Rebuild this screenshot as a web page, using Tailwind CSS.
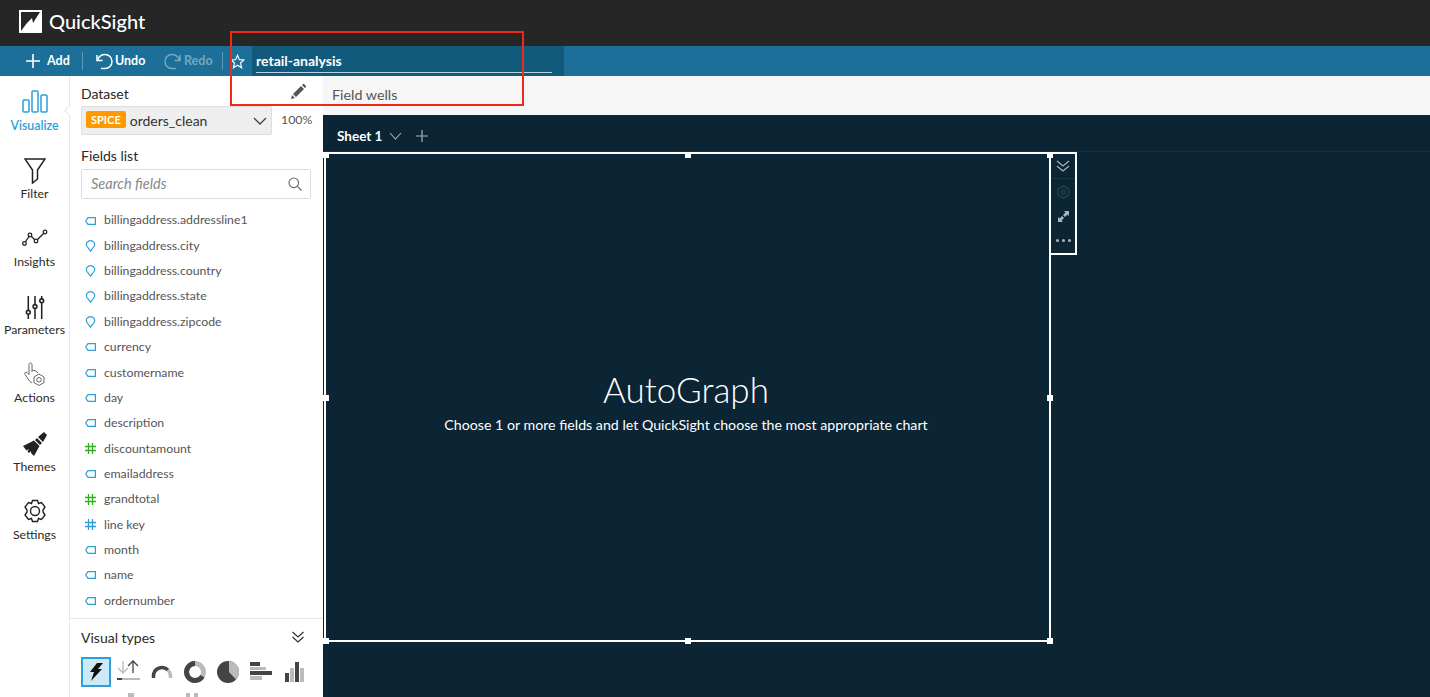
<!DOCTYPE html>
<html lang="en">
<head>
  <meta charset="UTF-8">
  <title>QuickSight</title>
  <script src="https://cdn.jsdelivr.net/npm/@tailwindcss/browser@4"></script>
</head>
<body class="relative w-[1430px] h-[697px] overflow-hidden bg-white font-['Lato',sans-serif]">

<!-- Top bar -->
<header class="h-[46px] bg-[#262626] flex items-center pl-[19px] gap-[7px] pb-[4px]">
  <svg width="23" height="23" viewBox="0 0 23 23"><rect width="23" height="23" fill="#fff"/><path d="M2 2H21L14 13L13 8L8 13L2 21Z" fill="#262626"/></svg>
  <span class="text-white text-[20px] leading-none font-medium">QuickSight</span>
</header>

<!-- Toolbar -->
<div class="h-[30px] bg-[#1b6f98] flex items-center text-white text-[12.5px] font-bold">
  <div class="flex items-center w-[82px] pl-[26px] gap-[7px]">
    <svg width="14" height="14" viewBox="0 0 14 14" stroke="#fff" stroke-width="1.6"><path d="M7 0V14M0 7H14"/></svg>
    <span>Add</span>
  </div>
  <div class="w-px h-[18px] bg-white/30"></div>
  <div class="flex items-center w-[78px] pl-[12px] gap-[1px]">
    <svg width="19" height="17" viewBox="0 0 19 17" fill="none" stroke="#fff" stroke-width="1.5"><path d="M2 2V7.5H7.5"/><path d="M2.5 7C4 3.5 6.5 1.5 10 1.5C14 1.5 17 4.5 17 8.5S14 15.5 10 15.5H6"/></svg>
    <span>Undo</span>
  </div>
  <div class="flex items-center w-[61px] pl-[2px] gap-[2px] text-white/40">
    <svg width="19" height="17" viewBox="0 0 19 17" fill="none" stroke="#fff" stroke-opacity=".4" stroke-width="1.5"><path d="M17 2V7.5H11.5"/><path d="M16.5 7C15 3.5 12.5 1.5 9 1.5C5 1.5 2 4.5 2 8.5S5 15.5 9 15.5H13"/></svg>
    <span>Redo</span>
  </div>
  <div class="w-px h-[18px] bg-white/30"></div>
  <div class="w-[29px] flex justify-center">
    <svg width="15" height="15" viewBox="0 0 24 24" fill="none" stroke="#fff" stroke-width="1.8"><path d="M12 2L15 9L22.5 9.5L16.8 14.5L18.6 22L12 18L5.4 22L7.2 14.5L1.5 9.5L9 9Z"/></svg>
  </div>
  <div class="w-[312px] h-full bg-[#125a7c] pl-[4px] pr-[12px] flex">
    <div class="w-full h-[27px] border-b border-[#b8d4e2] text-[14px] leading-[29px]">retail-analysis</div>
  </div>
</div>

<div class="flex h-[621px]">
  <!-- Icon rail -->
  <nav class="w-[70px] shrink-0 border-r border-[#e8e8e8] flex flex-col items-center text-[12.3px] leading-[16px] text-[#2a2a2a] relative">
    <div class="h-[60px] w-full pb-[2px] flex flex-col justify-end items-center text-[#2a9fd8] font-semibold">
      <svg class="mb-[5px]" width="26" height="23" viewBox="0 0 26 23" fill="none" stroke="#2a9fd8" stroke-width="1.5"><rect x="1" y="10" width="6" height="12" rx="1"/><rect x="10" y="1" width="6" height="21" rx="1"/><rect x="19" y="5" width="6" height="17" rx="1"/></svg>
      <span>Visualize</span>
    </div>
    <div class="h-[68px] w-full pb-[2px] flex flex-col justify-end items-center">
      <svg class="mb-[2px]" width="22" height="26" viewBox="0 0 22 26" fill="none" stroke="#222" stroke-width="1.5"><path d="M1 1H21L13.5 12V21L8.5 25V12Z"/></svg>
      <span>Filter</span>
    </div>
    <div class="h-[68px] w-full pb-[2px] flex flex-col justify-end items-center">
      <svg class="mb-[7px]" width="26" height="18" viewBox="0 0 26 18" fill="none" stroke="#222" stroke-width="1.3"><path d="M2 15L8 6L14 12L23 3"/><circle cx="2.5" cy="14.5" r="1.8" fill="#fff"/><circle cx="8" cy="6" r="1.8" fill="#fff"/><circle cx="14" cy="12" r="1.8" fill="#fff"/><circle cx="23" cy="3" r="1.8" fill="#fff"/></svg>
      <span>Insights</span>
    </div>
    <div class="h-[68px] w-full pb-[2px] flex flex-col justify-end items-center">
      <svg class="mb-[3px]" width="20" height="23" viewBox="0 0 20 24" fill="none" stroke="#222" stroke-width="1.6"><path d="M3 0V24M10 0V24M17 0V24"/><circle cx="3" cy="17" r="2" fill="#fff"/><circle cx="10" cy="11" r="2" fill="#fff"/><circle cx="17" cy="5" r="2" fill="#fff"/></svg>
      <span>Parameters</span>
    </div>
    <div class="h-[68px] w-full pb-[2px] flex flex-col justify-end items-center">
      <svg class="mb-[2px]" width="22" height="26" viewBox="0 0 22 26" fill="none" stroke="#666" stroke-width="1"><path d="M8 10V2.500C8 .5 5 .5 5 2.500V12.500L3 10.500C1.500 9.500 0 11 1 12.500L6 19.500L8 21"/><path d="M8 8L12 9L14 11"/><path d="M15 12L20 15V20.500L15 23.500L10 20.500V15Z"/><circle cx="15" cy="17.800" r="2.300"/></svg>
      <span>Actions</span>
    </div>
    <div class="h-[68px] w-full pb-[1px] flex flex-col justify-end items-center">
      <svg class="mb-[3px]" width="24" height="24" viewBox="0 0 24 24" fill="#222"><path d="M15 5L20 10L24 3L21 0ZM14 6L19 11L17 13L12 8ZM11 8.500L16.500 14L11 24L8 21L8 19L6 21L4.500 19.500L6 17L3.500 18.500L0 14Z"/></svg>
      <span>Themes</span>
    </div>
    <div class="h-[68px] w-full pb-[1px] flex flex-col justify-end items-center">
      <svg class="mb-[4px]" width="24" height="24" viewBox="0 0 24 24" fill="none" stroke="#222" stroke-width="1.4"><path d="M9.500 1.500H14.500L15.500 4.500L18.500 3.500L22 8L20 11V13L22 16L18.500 20.500L15.500 19.500L14.500 22.500H9.500L8.500 19.500L5.500 20.500L2 16L4 13V11L2 8L5.500 3.500L8.500 4.500Z"/><circle cx="12" cy="12" r="4.500"/></svg>
      <span>Settings</span>
    </div>
    <div class="absolute right-[-1px] top-[30px] w-[9px] h-[9px] translate-x-[5px] rotate-45 bg-white border-l border-b border-[#e8e8e8]"></div>
  </nav>

  <!-- Fields panel -->
  <aside class="w-[253px] shrink-0 flex flex-col text-[12.3px] text-[#2a2a2a]">
    <div class="pl-[11px] pr-[12px]">
      <div class="h-[30px] pt-[8px] flex justify-between">
        <span class="text-[14px] leading-[19px]">Dataset</span>
        <svg class="mr-[5px]" width="15" height="15" viewBox="0 0 15 15" fill="#555"><path d="M0 15L1 11L4 14ZM2 10L10 2L13 5L5 13ZM11 1L12 0H13L15 2V3L14 4Z"/></svg>
      </div>
      <div class="flex items-center">
        <div class="w-[191px] shrink-0 h-[29px] bg-[#eeeeee] border border-[#dddddd] rounded-[2px] flex items-center pl-[4px] pr-[4px]">
          <span class="bg-[#f90] text-white font-bold text-[11px] leading-[17px] px-[5px] rounded-[2px] mb-[2px]">SPICE</span>
          <span class="ml-[4px] text-[14px] text-[#333]">orders_clean</span>
          <svg class="ml-auto" width="14" height="8" viewBox="0 0 14 8" fill="none" stroke="#444" stroke-width="1.300"><path d="M1 1L7 7L13 1"/></svg>
        </div>
        <span class="ml-[9px] text-[#555]">100%</span>
      </div>
      <div class="mt-[11px] h-[23px] text-[14px] leading-[20px]">Fields list</div>
      <div class="h-[30px] w-[230px] border border-[#dddddd] rounded-[2px] flex items-center pl-[9px] pr-[8px]">
        <span class="italic text-[14.5px] text-[#888]">Search fields</span>
        <svg class="ml-auto" width="14" height="14" viewBox="0 0 14 14" fill="none" stroke="#666" stroke-width="1.100"><circle cx="5.800" cy="5.800" r="4.800"/><path d="M9.300 9.300L13.500 13.500"/></svg>
      </div>
    </div>

    <!-- Fields -->
    <ul class="mt-[9px] h-[413px] overflow-hidden border-b border-[#e5e5e5] text-[#555] pl-[15px]">
      <li class="h-[25.350px] flex items-center gap-[8px]"><svg width="11" height="8" viewBox="0 0 11 8" fill="none" stroke="#2a9fd8" stroke-width="1.200"><path d="M3 .6H10.400V7.400H3L.7 4Z"/></svg><span>billingaddress.addressline1</span></li>
      <li class="h-[25.350px] flex items-center gap-[8px]"><svg width="11" height="12" viewBox="0 0 11 12" fill="none" stroke="#2a9fd8" stroke-width="1.200"><path d="M5.500 11.200L2 6.500C.2 3.500 2.500 .7 5.500 .7S10.800 3.500 9 6.500Z"/></svg><span>billingaddress.city</span></li>
      <li class="h-[25.350px] flex items-center gap-[8px]"><svg width="11" height="12" viewBox="0 0 11 12" fill="none" stroke="#2a9fd8" stroke-width="1.200"><path d="M5.500 11.200L2 6.500C.2 3.500 2.500 .7 5.500 .7S10.800 3.500 9 6.500Z"/></svg><span>billingaddress.country</span></li>
      <li class="h-[25.350px] flex items-center gap-[8px]"><svg width="11" height="12" viewBox="0 0 11 12" fill="none" stroke="#2a9fd8" stroke-width="1.200"><path d="M5.500 11.200L2 6.500C.2 3.500 2.500 .7 5.500 .7S10.800 3.500 9 6.500Z"/></svg><span>billingaddress.state</span></li>
      <li class="h-[25.350px] flex items-center gap-[8px]"><svg width="11" height="12" viewBox="0 0 11 12" fill="none" stroke="#2a9fd8" stroke-width="1.200"><path d="M5.500 11.200L2 6.500C.2 3.500 2.500 .7 5.500 .7S10.800 3.500 9 6.500Z"/></svg><span>billingaddress.zipcode</span></li>
      <li class="h-[25.350px] flex items-center gap-[8px]"><svg width="11" height="8" viewBox="0 0 11 8" fill="none" stroke="#2a9fd8" stroke-width="1.200"><path d="M3 .6H10.400V7.400H3L.7 4Z"/></svg><span>currency</span></li>
      <li class="h-[25.350px] flex items-center gap-[8px]"><svg width="11" height="8" viewBox="0 0 11 8" fill="none" stroke="#2a9fd8" stroke-width="1.200"><path d="M3 .6H10.400V7.400H3L.7 4Z"/></svg><span>customername</span></li>
      <li class="h-[25.350px] flex items-center gap-[8px]"><svg width="11" height="8" viewBox="0 0 11 8" fill="none" stroke="#2a9fd8" stroke-width="1.200"><path d="M3 .6H10.400V7.400H3L.7 4Z"/></svg><span>day</span></li>
      <li class="h-[25.350px] flex items-center gap-[8px]"><svg width="11" height="8" viewBox="0 0 11 8" fill="none" stroke="#2a9fd8" stroke-width="1.200"><path d="M3 .6H10.400V7.400H3L.7 4Z"/></svg><span>description</span></li>
      <li class="h-[25.350px] flex items-center gap-[8px]"><svg width="11" height="11" viewBox="0 0 11 11" stroke="#2fae1e" stroke-width="1.300"><path d="M3.500 0V11M7.500 0V11M0 3.500H11M0 7.500H11"/></svg><span>discountamount</span></li>
      <li class="h-[25.350px] flex items-center gap-[8px]"><svg width="11" height="8" viewBox="0 0 11 8" fill="none" stroke="#2a9fd8" stroke-width="1.200"><path d="M3 .6H10.400V7.400H3L.7 4Z"/></svg><span>emailaddress</span></li>
      <li class="h-[25.350px] flex items-center gap-[8px]"><svg width="11" height="11" viewBox="0 0 11 11" stroke="#2fae1e" stroke-width="1.300"><path d="M3.500 0V11M7.500 0V11M0 3.500H11M0 7.500H11"/></svg><span>grandtotal</span></li>
      <li class="h-[25.350px] flex items-center gap-[8px]"><svg width="11" height="11" viewBox="0 0 11 11" stroke="#2a9fd8" stroke-width="1.300"><path d="M3.500 0V11M7.500 0V11M0 3.500H11M0 7.500H11"/></svg><span>line key</span></li>
      <li class="h-[25.350px] flex items-center gap-[8px]"><svg width="11" height="8" viewBox="0 0 11 8" fill="none" stroke="#2a9fd8" stroke-width="1.200"><path d="M3 .6H10.400V7.400H3L.7 4Z"/></svg><span>month</span></li>
      <li class="h-[25.350px] flex items-center gap-[8px]"><svg width="11" height="8" viewBox="0 0 11 8" fill="none" stroke="#2a9fd8" stroke-width="1.200"><path d="M3 .6H10.400V7.400H3L.7 4Z"/></svg><span>name</span></li>
      <li class="h-[25.350px] flex items-center gap-[8px]"><svg width="11" height="8" viewBox="0 0 11 8" fill="none" stroke="#2a9fd8" stroke-width="1.200"><path d="M3 .6H10.400V7.400H3L.7 4Z"/></svg><span>ordernumber</span></li>
    </ul>

    <!-- Visual types -->
    <div class="pl-[11px] pr-[19px] h-[36px] shrink-0 flex items-center justify-between">
      <span class="text-[14px]">Visual types</span>
      <svg width="12" height="12" viewBox="0 0 12 12" fill="none" stroke="#333" stroke-width="1.200"><path d="M.5 1L6 6L11.500 1M.5 6L6 11L11.500 6"/></svg>
    </div>
    <div class="mt-[2px] pl-[11px] flex items-center gap-[3px] h-[30px] shrink-0">
      <div class="w-[30px] h-[30px] bg-[#cfe8f7] border-2 border-[#2a9fd8] flex items-center justify-center"><svg width="14" height="18" viewBox="0 0 14 18" fill="#111"><path d="M8 0L14 0L9 6H13L2 18L5 9H1Z"/></svg></div>
      <svg width="30" height="24" viewBox="0 0 30 24" fill="none" stroke-width="1.300"><path d="M9 1V13M4 8L9 13L14 8" stroke="#bbb"/><path d="M19 13V1M14 6L19 1L24 6" stroke="#444"/><path d="M3 19H8" stroke="#444" stroke-width="2"/><path d="M8 19H26" stroke="#bbb" stroke-width="2"/></svg>
      <svg width="30" height="24" viewBox="0 0 30 24" fill="none" stroke-width="3.500"><path d="M6.500 18V16A8.500 8.500 0 0 1 21 10" stroke="#444"/><path d="M21 10A8.500 8.500 0 0 1 23.500 16V18" stroke="#bbb"/></svg>
      <svg width="30" height="24" viewBox="0 0 24 24" fill="none" stroke-width="5"><circle cx="12" cy="12" r="8.500" stroke="#bbb"/><path d="M19.400 16.300A8.500 8.500 0 1 1 12 3.500" stroke="#444"/></svg>
      <svg width="30" height="24" viewBox="0 0 24 24"><circle cx="12" cy="12" r="11" fill="#444"/><path d="M13 1A11 11 0 0 1 20 19.500L13 12Z" fill="#bbb"/></svg>
      <svg width="30" height="24" viewBox="0 0 30 24"><path d="M4 2H14V6H4Z" fill="#444"/><path d="M4 7H20V10H4Z" fill="#bbb"/><path d="M4 11H26V15H4Z" fill="#444"/><path d="M4 16H16V20H4Z" fill="#bbb"/></svg>
      <svg width="30" height="24" viewBox="0 0 30 24"><path d="M6 13H10V22H6ZM16 2H20V22H16Z" fill="#444"/><path d="M11 8H15V22H11ZM21 8H25V22H21Z" fill="#bbb"/></svg>
    </div>
    <div class="pl-[58px] pt-[6px] flex gap-[52px]">
      <div class="w-[6px] h-[4px] bg-[#bbb]"></div><div class="flex gap-[4px]"><div class="w-[4px] h-[4px] bg-[#bbb]"></div><div class="w-[4px] h-[4px] bg-[#bbb]"></div></div>
    </div>
  </aside>

  <!-- Main -->
  <main class="flex-1 flex flex-col">
    <div class="h-[39px] bg-[#f6f6f6] pl-[9px] pt-[8px] text-[14.3px] text-[#555] leading-[22px]">Field wells</div>
    <div class="relative flex-1 bg-[#0b2535] text-white">
      <div class="h-[37px] flex items-center pl-[14px] pt-[6px] border-b border-[#17333f] text-[13.5px] font-bold">
        <span>Sheet 1</span>
        <svg class="ml-[7px]" width="13" height="8" viewBox="0 0 13 8" fill="none" stroke="#aab6bd" stroke-width="1.100"><path d="M1 1L6.500 7L12 1"/></svg>
        <svg class="ml-[14px]" width="12" height="12" viewBox="0 0 12 12" stroke="#aab6bd" stroke-width="1.200"><path d="M6 0V12M0 6H12"/></svg>
      </div>

      <!-- Selected visual -->
      <div class="absolute left-[1px] top-[37px] w-[727px] h-[490px] border-2 border-white flex flex-col items-center justify-center pt-[10px] pr-[3px]">
        <div class="text-[35px] font-light leading-[40px]">AutoGraph</div>
        <div class="mt-[6px] text-[14.2px] leading-[20px]">Choose 1 or more fields and let QuickSight choose the most appropriate chart</div>
        <span class="absolute left-[-3px] top-[-2px] w-[6px] h-[6px] bg-white"></span>
        <span class="absolute left-[359px] top-[-2px] w-[6px] h-[6px] bg-white"></span>
        <span class="absolute right-[-4px] top-[-2px] w-[6px] h-[6px] bg-white"></span>
        <span class="absolute left-[-3px] top-[241px] w-[6px] h-[6px] bg-white"></span>
        <span class="absolute right-[-4px] top-[241px] w-[6px] h-[6px] bg-white"></span>
        <span class="absolute left-[-3px] bottom-[-4px] w-[6px] h-[6px] bg-white"></span>
        <span class="absolute left-[359px] bottom-[-4px] w-[6px] h-[6px] bg-white"></span>
        <span class="absolute right-[-4px] bottom-[-4px] w-[6px] h-[6px] bg-white"></span>
      </div>

      <!-- Visual menu -->
      <div class="absolute left-[726px] top-[37px] w-[28px] h-[103px] border-2 border-white flex flex-col items-center pt-[6px]">
        <svg width="14" height="12" viewBox="0 0 14 12" fill="none" stroke="#aab6bd" stroke-width="1.200"><path d="M1 1L7 6L13 1M1 6L7 11L13 6"/></svg>
        <div class="w-full h-px bg-[#17333f] mt-[6px]"></div>
        <svg class="mt-[6px]" width="13" height="14" viewBox="0 0 13 14" fill="none" stroke="#2c4654" stroke-width="1.100"><path d="M6.500 1L12 4V10L6.500 13L1 10V4Z"/><circle cx="6.500" cy="7" r="2"/></svg>
        <svg class="mt-[12px]" width="11" height="11" viewBox="0 0 11 11" fill="#aab6bd"><path d="M6 0H11V5L9.500 3.500L7 6L5 4L7.500 1.500ZM0 11V6L1.500 7.500L4 5L6 7L3.500 9.500L5 11Z"/></svg>
        <div class="mt-[17px] flex gap-[3px]"><span class="w-[3px] h-[3px] bg-[#aab6bd] rounded-full"></span><span class="w-[3px] h-[3px] bg-[#aab6bd] rounded-full"></span><span class="w-[3px] h-[3px] bg-[#aab6bd] rounded-full"></span></div>
      </div>
    </div>
  </main>
</div>

<!-- Annotation box -->
<div class="absolute left-[230px] top-[31px] w-[294px] h-[75px] border-2 border-[#f02a1a]"></div>

</body>
</html>
